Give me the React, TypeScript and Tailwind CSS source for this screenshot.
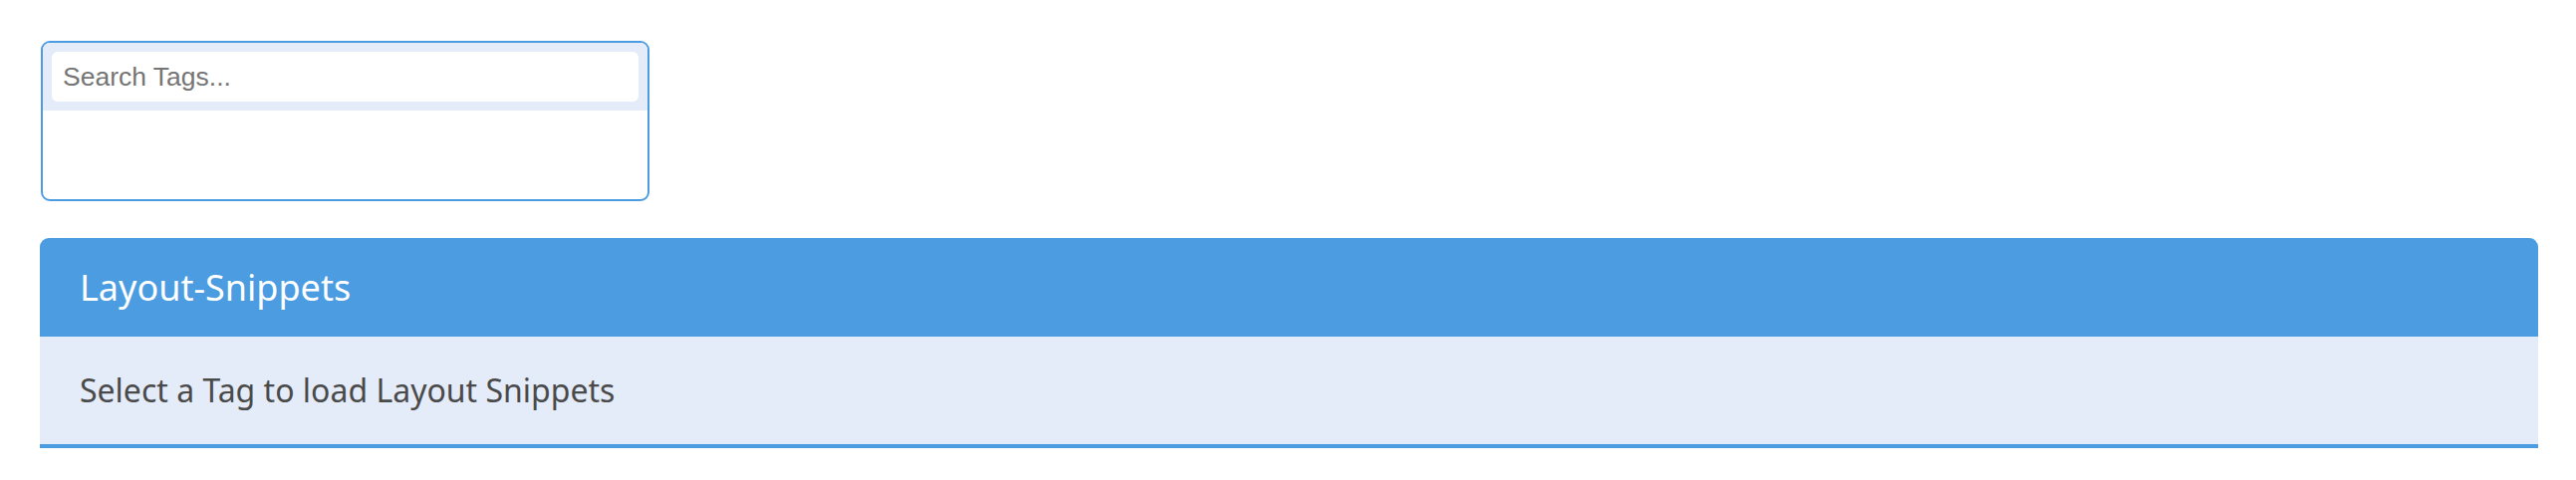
export default function App() {
  return (
    <div className="w-[2586px] h-[482px] bg-white pt-[41px]" style={{ fontFamily: '"Noto Sans", "Open Sans", sans-serif' }}>
      <div className="ml-[41px] w-[611px] h-[161px] rounded-[9px] border-2 border-[#4b9ce0] overflow-hidden">
        <div className="bg-[#e4ecf9] px-[9px] py-[9px]">
          <input
            type="text"
            placeholder="Search Tags..."
            className="w-full h-[50px] rounded-[6px] bg-white px-[11px] text-[26.5px] text-[#333] placeholder:text-[#757575] outline-none"
            style={{ fontFamily: '"Liberation Sans", Arial, sans-serif' }}
          />
        </div>
      </div>
      <div className="ml-[40px] mr-[38px] mt-[37px]">
        <div className="h-[99px] rounded-t-[9px] bg-[#4b9ce0] flex items-center px-[40px]">
          <h2 className="text-[36px] text-white leading-none">Layout-Snippets</h2>
        </div>
        <div className="h-[112px] bg-[#e4ecf9] border-b-4 border-[#4b9ce0] flex items-center px-[40px]">
          <p className="text-[32px] text-[#4a4a4a] leading-none">Select a Tag to load Layout Snippets</p>
        </div>
      </div>
    </div>
  );
}
